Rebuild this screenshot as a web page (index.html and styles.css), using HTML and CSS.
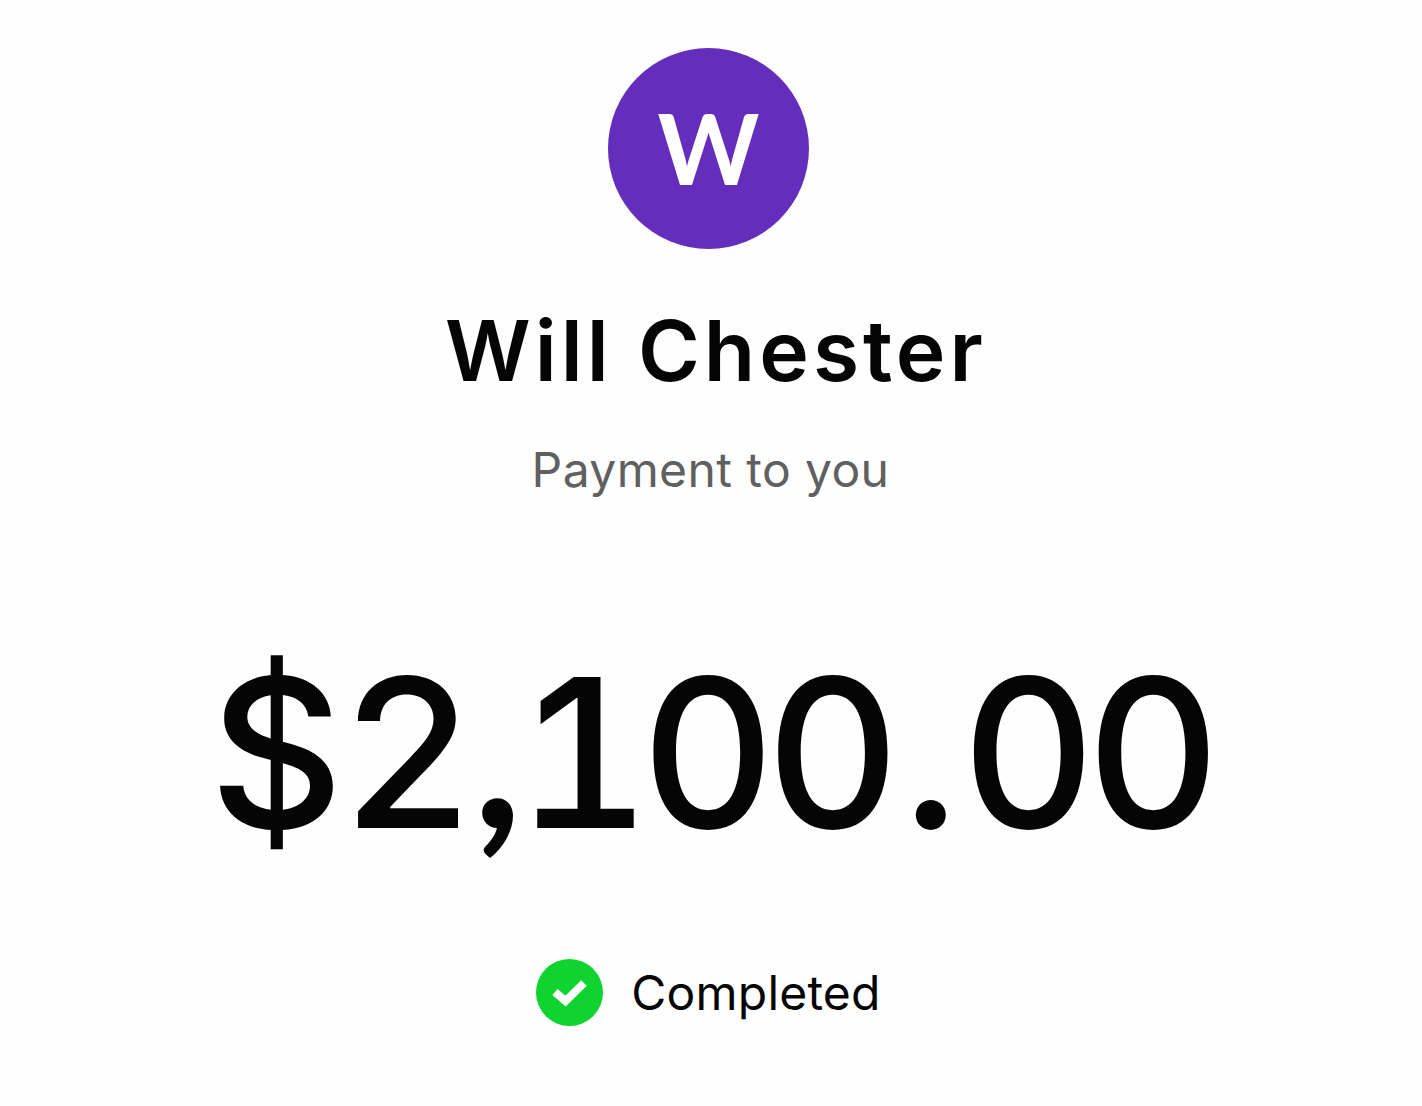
FILE: index.html
```html
<!DOCTYPE html>
<html lang="en">
<head>
    <meta charset="UTF-8">
    <title>Payment</title>
    <link rel="stylesheet" href="styles.css">
</head>
<body>
    <div id="payment">
        <div class="avatar">W</div>
        <h1 class="name">Will Chester</h1>
        <p class="subtitle">Payment to you</p>
        <div class="amount"><span class="dollar">$</span>2<span class="comma">,</span>100<span class="dot">.</span>00</div>
        <div class="status">
            <svg class="status-icon" width="67" height="67" viewBox="0 0 67 67">
                <circle cx="33.5" cy="33.5" r="33.5" fill="#0fd32f"/>
                <path d="M19 33 L29.5 42 L48 24" fill="none" stroke="#fff" stroke-width="8"/>
            </svg>
            <span>Completed</span>
        </div>
    </div>
</body>
</html>
```
FILE: styles.css
```css
body {
    margin: 0;
    background-color: #fefefe;
    font-family: "Inter", "Liberation Sans", sans-serif;
    color: #050505;
}

#payment {
    height: 1106px;
    padding: 48px 5px 0 0;
    box-sizing: border-box;
    display: flex;
    flex-direction: column;
    align-items: center;
}

.avatar {
    width: 201px;
    height: 201px;
    border-radius: 50%;
    background-color: #652dbb;
    color: #fff;
    font-family: "Lato", sans-serif;
    font-size: 97px;
    font-weight: 700;
    line-height: 199px;
    text-align: center;
}

.name {
    margin: 54px 0 0 15px;
    font-size: 84px;
    line-height: 96px;
    font-weight: 600;
    letter-spacing: 4px;
}

.subtitle {
    margin: 42px 0 0 4px;
    font-size: 48px;
    line-height: 58px;
    letter-spacing: 0.4px;
    color: #606060;
}

.amount {
    margin: 128px 0 0 3px;
    font-size: 208px;
    font-weight: 550;
    line-height: 250px;
    letter-spacing: -10px;
    font-feature-settings: "tnum";
}

.dollar {
    margin-right: 7px;
}

.comma {
    margin: 0 4px 0 8px;
    font-family: "Lato", sans-serif;
    font-weight: 700;
    line-height: 0;
}

.dot {
    margin: 0 13px 0 12px;
}

.status {
    margin-top: 82px;
    display: flex;
    align-items: center;
    gap: 28px;
    font-size: 48px;
    letter-spacing: 0.2px;
}
```
